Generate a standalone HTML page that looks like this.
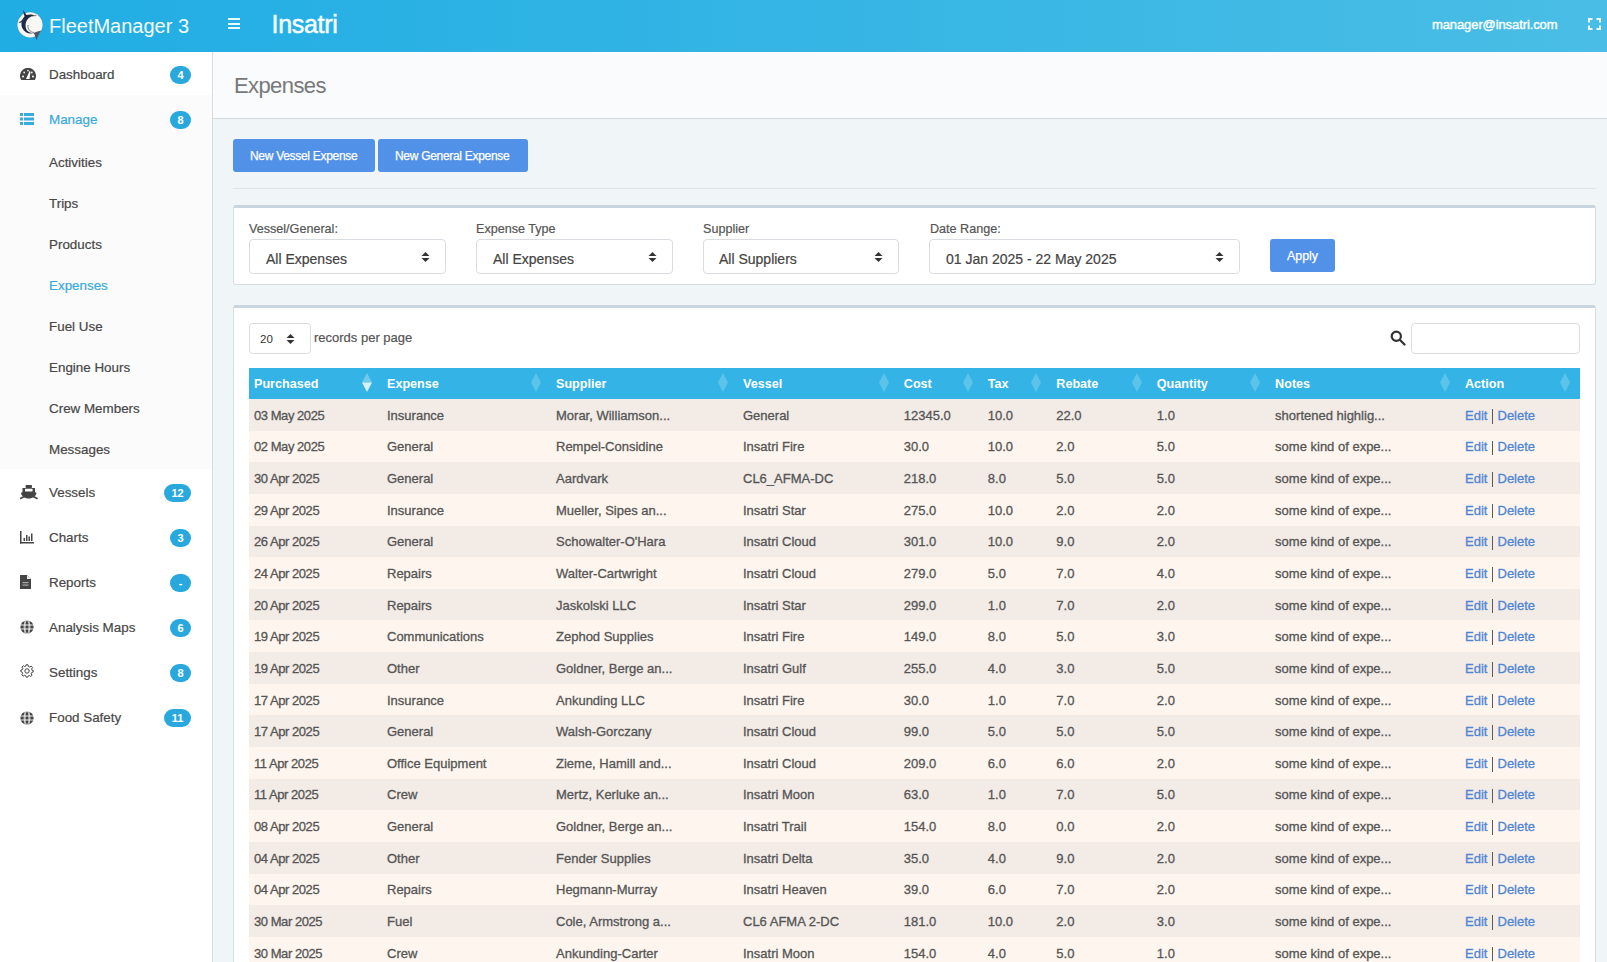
<!DOCTYPE html>
<html><head><meta charset="utf-8">
<style>
*{box-sizing:border-box}
html,body{margin:0;padding:0}
body{width:1607px;height:962px;overflow:hidden;position:relative;font-family:"Liberation Sans",sans-serif;background:#f0f5f8;color:#444}
.abs{position:absolute}
.t{position:absolute;white-space:nowrap;line-height:1}
.badge{position:absolute;height:18px;border-radius:9px;background:#29a8de;color:#fff;font-weight:700;font-size:11px;line-height:18px;text-align:center;font-family:"Liberation Sans",sans-serif}
</style></head><body>
<div class="abs" style="left:0px;top:0px;width:1607px;height:52px;background:linear-gradient(to right,#20ade4,#49bde5)"></div>
<svg class="abs" style="left:12px;top:6px" width="36" height="38" viewBox="0 0 36 38">
<circle cx="18" cy="18.8" r="13.2" fill="#1d94cc" opacity="0.6"/>
<circle cx="18" cy="18.8" r="12.6" fill="#f9f7f2"/>
<path d="M11 4 L14.5 9 C17 8 20.5 8.2 23 9.8 C20 10 18 11 16.2 12.5 C13.5 15 13 19 14 22.5 C15 25.5 18 27.2 21.5 27 C17.5 28.5 12.5 26.5 10.5 22.5 C8.5 18.5 9.5 13.5 12.5 10.5 Z" fill="#1f2b47"/>
<path d="M14.5 9 C13 13 8 15 6.5 17 C9 16.5 10.5 16 11.5 15.5" fill="#2a3858"/>
<path d="M16 19 C15.5 23 18 26 22 26.5" stroke="#6b7280" stroke-width="0.9" fill="none"/>
<path d="M21.5 27 C24 26 27 25 29.5 24.5 C27 27.5 25.5 30.5 24.5 34.5 C23.8 31.5 23 29 21.5 27 Z" fill="#4b5563"/>
<path d="M20 10 L24.5 9.5" stroke="#555" stroke-width="0.7"/>
</svg>
<div class="t" style="left:49.00px;top:16.07px;font-size:20px;color:#f4fbff">FleetManager 3</div>
<div class="abs" style="left:228px;top:18px;width:12px;height:2px;background:#e8fbff"></div>
<div class="abs" style="left:228px;top:23px;width:12px;height:2px;background:#e8fbff"></div>
<div class="abs" style="left:228px;top:27px;width:12px;height:2px;background:#e8fbff"></div>
<div class="t" style="left:271.50px;top:11.84px;font-size:25px;color:#f7fdff;letter-spacing:-0.3px;-webkit-text-stroke:0.5px #f7fdff">Insatri</div>
<div class="t" style="left:1432.00px;top:18.00px;font-size:13px;color:#f7fdff;letter-spacing:-0.1px;-webkit-text-stroke:0.45px #f7fdff">manager@insatri.com</div>
<svg class="abs" style="left:1588px;top:18px" width="13" height="12" viewBox="0 0 13 12" fill="none" stroke="#f4fbff" stroke-width="2">
<path d="M1 4.5V1H4.5M8.5 1H12V4.5M12 7.5V11H8.5M4.5 11H1V7.5"/></svg>
<div class="abs" style="left:0px;top:52px;width:212px;height:910px;background:#fff"></div>
<div class="abs" style="left:212px;top:52px;width:1px;height:910px;background:#d9dbdd"></div>
<div class="abs" style="left:0px;top:95px;width:212px;height:374px;background:#fbfbfb"></div>
<div class="t" style="left:49.00px;top:67.96px;font-size:13.4px;color:#474747;-webkit-text-stroke:0.2px currentColor">Dashboard</div>
<div class="t" style="left:49.00px;top:112.96px;font-size:13.4px;color:#38aadc;-webkit-text-stroke:0.2px currentColor">Manage</div>
<div class="t" style="left:49.00px;top:155.66px;font-size:13.4px;color:#474747;-webkit-text-stroke:0.2px currentColor">Activities</div>
<div class="t" style="left:49.00px;top:196.66px;font-size:13.4px;color:#474747;-webkit-text-stroke:0.2px currentColor">Trips</div>
<div class="t" style="left:49.00px;top:237.66px;font-size:13.4px;color:#474747;-webkit-text-stroke:0.2px currentColor">Products</div>
<div class="t" style="left:49.00px;top:278.66px;font-size:13.4px;color:#38aadc;-webkit-text-stroke:0.2px currentColor">Expenses</div>
<div class="t" style="left:49.00px;top:319.66px;font-size:13.4px;color:#474747;-webkit-text-stroke:0.2px currentColor">Fuel Use</div>
<div class="t" style="left:49.00px;top:360.66px;font-size:13.4px;color:#474747;-webkit-text-stroke:0.2px currentColor">Engine Hours</div>
<div class="t" style="left:49.00px;top:401.66px;font-size:13.4px;color:#474747;-webkit-text-stroke:0.2px currentColor">Crew Members</div>
<div class="t" style="left:49.00px;top:442.66px;font-size:13.4px;color:#474747;-webkit-text-stroke:0.2px currentColor">Messages</div>
<div class="t" style="left:49.00px;top:485.66px;font-size:13.4px;color:#474747;-webkit-text-stroke:0.2px currentColor">Vessels</div>
<div class="t" style="left:49.00px;top:530.66px;font-size:13.4px;color:#474747;-webkit-text-stroke:0.2px currentColor">Charts</div>
<div class="t" style="left:49.00px;top:575.66px;font-size:13.4px;color:#474747;-webkit-text-stroke:0.2px currentColor">Reports</div>
<div class="t" style="left:49.00px;top:620.66px;font-size:13.4px;color:#474747;-webkit-text-stroke:0.2px currentColor">Analysis Maps</div>
<div class="t" style="left:49.00px;top:665.66px;font-size:13.4px;color:#474747;-webkit-text-stroke:0.2px currentColor">Settings</div>
<div class="t" style="left:49.00px;top:710.66px;font-size:13.4px;color:#474747;-webkit-text-stroke:0.2px currentColor">Food Safety</div>
<div class="badge" style="left:170px;top:66px;width:21px">4</div>
<div class="badge" style="left:170px;top:111px;width:21px">8</div>
<div class="badge" style="left:164px;top:484px;width:27px">12</div>
<div class="badge" style="left:170px;top:529px;width:21px">3</div>
<div class="badge" style="left:170px;top:574px;width:21px">-</div>
<div class="badge" style="left:170px;top:619px;width:21px">6</div>
<div class="badge" style="left:170px;top:664px;width:21px">8</div>
<div class="badge" style="left:164px;top:709px;width:27px">11</div>
<svg class="abs" style="left:20px;top:68px" width="16" height="12" viewBox="0 0 16 12">
<path d="M1.2 12 A8 8 0 1 1 14.8 12 Z" fill="#444"/>
<circle cx="3" cy="8.5" r="1" fill="#fff"/><circle cx="13" cy="8.5" r="1" fill="#fff"/>
<circle cx="4.2" cy="4.5" r="0.9" fill="#eee"/><circle cx="11.8" cy="4.5" r="0.9" fill="#eee"/><circle cx="8" cy="2.6" r="0.9" fill="#eee"/>
<path d="M6 11 L9.6 3 L10.5 3.4 L9.6 11 Z" fill="#fff"/>
</svg>
<svg class="abs" style="left:20px;top:113px" width="14" height="12" viewBox="0 0 14 12" fill="#38aadc">
<rect x="0" y="0" width="3" height="3"/><rect x="4" y="0" width="10" height="3"/>
<rect x="0" y="4.5" width="3" height="3"/><rect x="4" y="4.5" width="10" height="3"/>
<rect x="0" y="9" width="3" height="3"/><rect x="4" y="9" width="10" height="3"/>
</svg>
<svg class="abs" style="left:20px;top:484px" width="18" height="16" viewBox="0 0 18 16">
<rect x="5.5" y="1" width="6.5" height="3" rx="1" fill="#444"/>
<path d="M2.5 4 H15 V8 L16.5 9 C16 12 13 14.5 8.75 14.5 C4.5 14.5 1.5 12 1 9 L2.5 8 Z" fill="#444"/>
<rect x="5" y="4.8" width="7.5" height="2.8" rx="0.5" fill="#fff"/>
<path d="M0.5 14.5 Q3 13 4.5 12.5 M13 12.5 Q14.5 13 17 14.5" stroke="#444" stroke-width="1.5" fill="none" stroke-linecap="round"/>
</svg>
<svg class="abs" style="left:20px;top:530px" width="14" height="14" viewBox="0 0 14 14" fill="#444">
<rect x="0" y="1" width="1.5" height="12.5"/><rect x="0" y="12" width="14" height="1.5"/>
<rect x="3.5" y="8" width="1.5" height="3"/><rect x="6" y="5" width="1.5" height="6"/><rect x="8.5" y="6.5" width="1.5" height="4.5"/><rect x="11" y="3.5" width="1.5" height="7.5"/>
</svg>
<svg class="abs" style="left:20px;top:575px" width="11" height="14" viewBox="0 0 11 14">
<path d="M0 0 H7 L11 4 V14 H0 Z" fill="#444"/><path d="M7 0 V4 H11" fill="#fff" opacity="0.9"/>
<rect x="2.5" y="7" width="6" height="1.2" fill="#aaa"/><rect x="2.5" y="9.5" width="6" height="1.2" fill="#aaa"/>
</svg>
<svg class="abs" style="left:20px;top:620px" width="14" height="14" viewBox="0 0 14 14">
<circle cx="7" cy="7" r="6.6" fill="#444"/>
<path d="M0.5 5H13.5M0.5 9H13.5M5 0.5V13.5M9 0.5V13.5" stroke="#fff" stroke-width="0.9"/>
<path d="M7 0.4 C3 3 3 11 7 13.6 C11 11 11 3 7 0.4" stroke="#fff" stroke-width="0.6" fill="none"/>
</svg>
<svg class="abs" style="left:20px;top:710.5px" width="14" height="14" viewBox="0 0 14 14">
<circle cx="7" cy="7" r="6.6" fill="#444"/>
<path d="M0.5 5H13.5M0.5 9H13.5M5 0.5V13.5M9 0.5V13.5" stroke="#fff" stroke-width="0.9"/>
<path d="M7 0.4 C3 3 3 11 7 13.6 C11 11 11 3 7 0.4" stroke="#fff" stroke-width="0.6" fill="none"/>
</svg>
<svg class="abs" style="left:20px;top:664px" width="14" height="14" viewBox="0 0 14 14" fill="none" stroke="#444" stroke-width="1">
<path d="M6 0.8 H8 L8.4 2.4 L9.8 3 L11.2 2.1 L12.5 3.5 L11.6 4.9 L12.2 6.3 L13.2 6.5 V8 L11.8 8.4 L11.2 9.8 L12.1 11.2 L10.7 12.5 L9.3 11.6 L8 12.1 L7.6 13.2 H6.3 L5.9 11.9 L4.5 11.3 L3.1 12.2 L1.8 10.8 L2.6 9.4 L2 8 L0.8 7.6 V6.2 L2.2 5.8 L2.8 4.4 L1.9 3 L3.3 1.7 L4.7 2.6 L5.8 2.1 Z"/>
<circle cx="7" cy="7" r="2.2"/>
</svg>
<div class="abs" style="left:213px;top:52px;width:1394px;height:66px;background:#f9fbfc"></div>
<div class="abs" style="left:213px;top:118px;width:1394px;height:1px;background:#d3d9dd"></div>
<div class="abs" style="left:213px;top:119px;width:1394px;height:843px;background:#f0f5f8"></div>
<div class="t" style="left:234.00px;top:74.58px;font-size:22px;color:#787878;letter-spacing:-0.6px">Expenses</div>
<div class="abs" style="left:233px;top:139px;width:142px;height:33px;background:#5291e8;border-radius:3px"></div>
<div class="t" style="left:250.00px;top:149.84px;font-size:12px;color:#fff;letter-spacing:-0.3px;-webkit-text-stroke:0.25px #fff">New Vessel Expense</div>
<div class="abs" style="left:378px;top:139px;width:150px;height:33px;background:#5291e8;border-radius:3px"></div>
<div class="t" style="left:395.00px;top:149.84px;font-size:12px;color:#fff;letter-spacing:-0.3px;-webkit-text-stroke:0.25px #fff">New General Expense</div>
<div class="abs" style="left:233px;top:188px;width:1363px;height:1px;background:#dde3e7"></div>
<div class="abs" style="left:233px;top:205px;width:1363px;height:80px;background:#fff;border:1px solid #d5dde2;border-top:3px solid #c9d6df;border-radius:3px"></div>
<div class="t" style="left:249.00px;top:223.13px;font-size:12.6px;color:#555;-webkit-text-stroke:0.2px currentColor">Vessel/General:</div>
<div class="t" style="left:476.00px;top:223.13px;font-size:12.6px;color:#555;-webkit-text-stroke:0.2px currentColor">Expense Type</div>
<div class="t" style="left:703.00px;top:223.13px;font-size:12.6px;color:#555;-webkit-text-stroke:0.2px currentColor">Supplier</div>
<div class="t" style="left:930.00px;top:223.13px;font-size:12.6px;color:#555;-webkit-text-stroke:0.2px currentColor">Date Range:</div>
<div class="abs" style="left:249px;top:239px;width:197px;height:35px;background:#fff;border:1px solid #d9dde1;border-radius:4px"></div>
<div class="t" style="left:266.00px;top:252.45px;font-size:14px;color:#444;-webkit-text-stroke:0.2px currentColor">All Expenses</div>
<svg class="abs" style="left:421px;top:252px" width="9" height="10" viewBox="0 0 9 10" fill="#333">
<path d="M4.5 0 L8.5 4 H0.5 Z M0.5 6 H8.5 L4.5 10 Z"/></svg>
<div class="abs" style="left:476px;top:239px;width:197px;height:35px;background:#fff;border:1px solid #d9dde1;border-radius:4px"></div>
<div class="t" style="left:493.00px;top:252.45px;font-size:14px;color:#444;-webkit-text-stroke:0.2px currentColor">All Expenses</div>
<svg class="abs" style="left:648px;top:252px" width="9" height="10" viewBox="0 0 9 10" fill="#333">
<path d="M4.5 0 L8.5 4 H0.5 Z M0.5 6 H8.5 L4.5 10 Z"/></svg>
<div class="abs" style="left:703px;top:239px;width:196px;height:35px;background:#fff;border:1px solid #d9dde1;border-radius:4px"></div>
<div class="t" style="left:719.00px;top:252.45px;font-size:14px;color:#444;-webkit-text-stroke:0.2px currentColor">All Suppliers</div>
<svg class="abs" style="left:874px;top:252px" width="9" height="10" viewBox="0 0 9 10" fill="#333">
<path d="M4.5 0 L8.5 4 H0.5 Z M0.5 6 H8.5 L4.5 10 Z"/></svg>
<div class="abs" style="left:929px;top:239px;width:311px;height:35px;background:#fff;border:1px solid #d9dde1;border-radius:4px"></div>
<div class="t" style="left:946.00px;top:251.75px;font-size:14px;color:#444;-webkit-text-stroke:0.2px currentColor">01 Jan 2025 - 22 May 2025</div>
<svg class="abs" style="left:1215px;top:252px" width="9" height="10" viewBox="0 0 9 10" fill="#333">
<path d="M4.5 0 L8.5 4 H0.5 Z M0.5 6 H8.5 L4.5 10 Z"/></svg>
<div class="abs" style="left:1270px;top:239px;width:65px;height:33px;background:#5291e8;border-radius:3px"></div>
<div class="t" style="left:1287.00px;top:249.50px;font-size:12.4px;color:#fff;letter-spacing:0px;-webkit-text-stroke:0.25px #fff">Apply</div>
<div class="abs" style="left:233px;top:305px;width:1363px;height:700px;background:#fff;border:1px solid #d5dde2;border-top:3px solid #c9d6df;border-radius:3px"></div>
<div class="abs" style="left:249px;top:323px;width:62px;height:31px;background:#fff;border:1px solid #d9dde1;border-radius:4px"></div>
<div class="t" style="left:260.00px;top:334.27px;font-size:11.5px;color:#333">20</div>
<svg class="abs" style="left:286px;top:334px" width="9" height="10" viewBox="0 0 9 10" fill="#333">
<path d="M4.5 0 L8.5 4 H0.5 Z M0.5 6 H8.5 L4.5 10 Z"/></svg>
<div class="t" style="left:314.00px;top:330.70px;font-size:13px;color:#555;-webkit-text-stroke:0.2px currentColor">records per page</div>
<svg class="abs" style="left:1390px;top:330px" width="16" height="16" viewBox="0 0 16 16" fill="none" stroke="#333" stroke-width="2.2">
<circle cx="6.3" cy="6.3" r="4.6"/><path d="M9.8 9.8 L14.5 14.5" stroke-linecap="round"/></svg>
<div class="abs" style="left:1411px;top:323px;width:169px;height:31px;background:#fff;border:1px solid #d9dde1;border-radius:4px"></div>
<div class="abs" style="left:249px;top:368px;width:1331px;height:31px;background:#34b4e6"></div>
<div class="t" style="left:254.00px;top:378.03px;font-size:12.6px;color:#fff;font-weight:700">Purchased</div>
<svg class="abs" style="left:361.7px;top:372.5px" width="10" height="19" viewBox="0 0 10 19">
<path d="M5 0 L10 9.5 H0 Z" fill="#fff" opacity="0.3"/><path d="M0 9.5 H10 L5 19 Z" fill="#fff" opacity="0.8"/></svg>
<div class="t" style="left:387.00px;top:378.03px;font-size:12.6px;color:#fff;font-weight:700">Expense</div>
<svg class="abs" style="left:530.7px;top:372.5px" width="10" height="19" viewBox="0 0 10 19">
<path d="M5 0 L10 9.5 L5 19 L0 9.5 Z" fill="#fff" opacity="0.2"/></svg>
<div class="t" style="left:556.00px;top:378.03px;font-size:12.6px;color:#fff;font-weight:700">Supplier</div>
<svg class="abs" style="left:717.7px;top:372.5px" width="10" height="19" viewBox="0 0 10 19">
<path d="M5 0 L10 9.5 L5 19 L0 9.5 Z" fill="#fff" opacity="0.2"/></svg>
<div class="t" style="left:743.00px;top:378.03px;font-size:12.6px;color:#fff;font-weight:700">Vessel</div>
<svg class="abs" style="left:878.5px;top:372.5px" width="10" height="19" viewBox="0 0 10 19">
<path d="M5 0 L10 9.5 L5 19 L0 9.5 Z" fill="#fff" opacity="0.2"/></svg>
<div class="t" style="left:903.80px;top:378.03px;font-size:12.6px;color:#fff;font-weight:700">Cost</div>
<svg class="abs" style="left:962.5px;top:372.5px" width="10" height="19" viewBox="0 0 10 19">
<path d="M5 0 L10 9.5 L5 19 L0 9.5 Z" fill="#fff" opacity="0.2"/></svg>
<div class="t" style="left:987.80px;top:378.03px;font-size:12.6px;color:#fff;font-weight:700">Tax</div>
<svg class="abs" style="left:1031.0px;top:372.5px" width="10" height="19" viewBox="0 0 10 19">
<path d="M5 0 L10 9.5 L5 19 L0 9.5 Z" fill="#fff" opacity="0.2"/></svg>
<div class="t" style="left:1056.30px;top:378.03px;font-size:12.6px;color:#fff;font-weight:700">Rebate</div>
<svg class="abs" style="left:1131.5px;top:372.5px" width="10" height="19" viewBox="0 0 10 19">
<path d="M5 0 L10 9.5 L5 19 L0 9.5 Z" fill="#fff" opacity="0.2"/></svg>
<div class="t" style="left:1156.80px;top:378.03px;font-size:12.6px;color:#fff;font-weight:700">Quantity</div>
<svg class="abs" style="left:1249.8px;top:372.5px" width="10" height="19" viewBox="0 0 10 19">
<path d="M5 0 L10 9.5 L5 19 L0 9.5 Z" fill="#fff" opacity="0.2"/></svg>
<div class="t" style="left:1275.10px;top:378.03px;font-size:12.6px;color:#fff;font-weight:700">Notes</div>
<svg class="abs" style="left:1439.6px;top:372.5px" width="10" height="19" viewBox="0 0 10 19">
<path d="M5 0 L10 9.5 L5 19 L0 9.5 Z" fill="#fff" opacity="0.2"/></svg>
<div class="t" style="left:1464.90px;top:378.03px;font-size:12.6px;color:#fff;font-weight:700">Action</div>
<svg class="abs" style="left:1559.7px;top:372.5px" width="10" height="19" viewBox="0 0 10 19">
<path d="M5 0 L10 9.5 L5 19 L0 9.5 Z" fill="#fff" opacity="0.2"/></svg>
<div class="abs" style="left:249px;top:399.00px;width:1331px;height:31.64px;background:#f2ebe6"></div>
<div class="t" style="left:254.00px;top:408.80px;font-size:13px;color:#555;letter-spacing:-0.45px;-webkit-text-stroke:0.3px currentColor">03 May 2025</div>
<div class="t" style="left:387.00px;top:408.80px;font-size:13px;color:#555;-webkit-text-stroke:0.3px currentColor">Insurance</div>
<div class="t" style="left:556.00px;top:408.80px;font-size:13px;color:#555;-webkit-text-stroke:0.3px currentColor">Morar, Williamson...</div>
<div class="t" style="left:743.00px;top:408.80px;font-size:13px;color:#555;-webkit-text-stroke:0.3px currentColor">General</div>
<div class="t" style="left:903.80px;top:408.80px;font-size:13px;color:#555;-webkit-text-stroke:0.3px currentColor">12345.0</div>
<div class="t" style="left:987.80px;top:408.80px;font-size:13px;color:#555;-webkit-text-stroke:0.3px currentColor">10.0</div>
<div class="t" style="left:1056.30px;top:408.80px;font-size:13px;color:#555;-webkit-text-stroke:0.3px currentColor">22.0</div>
<div class="t" style="left:1156.80px;top:408.80px;font-size:13px;color:#555;-webkit-text-stroke:0.3px currentColor">1.0</div>
<div class="t" style="left:1275.10px;top:408.80px;font-size:13px;color:#555;-webkit-text-stroke:0.3px currentColor">shortened highlig...</div>
<div class="t" style="left:1465.00px;top:408.80px;font-size:13px;color:#4f85d3;-webkit-text-stroke:0.3px currentColor">Edit</div>
<div class="abs" style="left:1492.3px;top:409.00px;width:1.2px;height:14.5px;background:#5a5a5a"></div>
<div class="t" style="left:1497.50px;top:408.80px;font-size:13px;color:#4f85d3;-webkit-text-stroke:0.3px currentColor">Delete</div>
<div class="abs" style="left:249px;top:430.64px;width:1331px;height:31.64px;background:#fef6ee"></div>
<div class="t" style="left:254.00px;top:440.44px;font-size:13px;color:#555;letter-spacing:-0.45px;-webkit-text-stroke:0.3px currentColor">02 May 2025</div>
<div class="t" style="left:387.00px;top:440.44px;font-size:13px;color:#555;-webkit-text-stroke:0.3px currentColor">General</div>
<div class="t" style="left:556.00px;top:440.44px;font-size:13px;color:#555;-webkit-text-stroke:0.3px currentColor">Rempel-Considine</div>
<div class="t" style="left:743.00px;top:440.44px;font-size:13px;color:#555;-webkit-text-stroke:0.3px currentColor">Insatri Fire</div>
<div class="t" style="left:903.80px;top:440.44px;font-size:13px;color:#555;-webkit-text-stroke:0.3px currentColor">30.0</div>
<div class="t" style="left:987.80px;top:440.44px;font-size:13px;color:#555;-webkit-text-stroke:0.3px currentColor">10.0</div>
<div class="t" style="left:1056.30px;top:440.44px;font-size:13px;color:#555;-webkit-text-stroke:0.3px currentColor">2.0</div>
<div class="t" style="left:1156.80px;top:440.44px;font-size:13px;color:#555;-webkit-text-stroke:0.3px currentColor">5.0</div>
<div class="t" style="left:1275.10px;top:440.44px;font-size:13px;color:#555;-webkit-text-stroke:0.3px currentColor">some kind of expe...</div>
<div class="t" style="left:1465.00px;top:440.44px;font-size:13px;color:#4f85d3;-webkit-text-stroke:0.3px currentColor">Edit</div>
<div class="abs" style="left:1492.3px;top:440.64px;width:1.2px;height:14.5px;background:#5a5a5a"></div>
<div class="t" style="left:1497.50px;top:440.44px;font-size:13px;color:#4f85d3;-webkit-text-stroke:0.3px currentColor">Delete</div>
<div class="abs" style="left:249px;top:462.28px;width:1331px;height:31.64px;background:#f2ebe6"></div>
<div class="t" style="left:254.00px;top:472.08px;font-size:13px;color:#555;letter-spacing:-0.45px;-webkit-text-stroke:0.3px currentColor">30 Apr 2025</div>
<div class="t" style="left:387.00px;top:472.08px;font-size:13px;color:#555;-webkit-text-stroke:0.3px currentColor">General</div>
<div class="t" style="left:556.00px;top:472.08px;font-size:13px;color:#555;-webkit-text-stroke:0.3px currentColor">Aardvark</div>
<div class="t" style="left:743.00px;top:472.08px;font-size:13px;color:#555;-webkit-text-stroke:0.3px currentColor">CL6_AFMA-DC</div>
<div class="t" style="left:903.80px;top:472.08px;font-size:13px;color:#555;-webkit-text-stroke:0.3px currentColor">218.0</div>
<div class="t" style="left:987.80px;top:472.08px;font-size:13px;color:#555;-webkit-text-stroke:0.3px currentColor">8.0</div>
<div class="t" style="left:1056.30px;top:472.08px;font-size:13px;color:#555;-webkit-text-stroke:0.3px currentColor">5.0</div>
<div class="t" style="left:1156.80px;top:472.08px;font-size:13px;color:#555;-webkit-text-stroke:0.3px currentColor">5.0</div>
<div class="t" style="left:1275.10px;top:472.08px;font-size:13px;color:#555;-webkit-text-stroke:0.3px currentColor">some kind of expe...</div>
<div class="t" style="left:1465.00px;top:472.08px;font-size:13px;color:#4f85d3;-webkit-text-stroke:0.3px currentColor">Edit</div>
<div class="abs" style="left:1492.3px;top:472.28px;width:1.2px;height:14.5px;background:#5a5a5a"></div>
<div class="t" style="left:1497.50px;top:472.08px;font-size:13px;color:#4f85d3;-webkit-text-stroke:0.3px currentColor">Delete</div>
<div class="abs" style="left:249px;top:493.92px;width:1331px;height:31.64px;background:#fef6ee"></div>
<div class="t" style="left:254.00px;top:503.72px;font-size:13px;color:#555;letter-spacing:-0.45px;-webkit-text-stroke:0.3px currentColor">29 Apr 2025</div>
<div class="t" style="left:387.00px;top:503.72px;font-size:13px;color:#555;-webkit-text-stroke:0.3px currentColor">Insurance</div>
<div class="t" style="left:556.00px;top:503.72px;font-size:13px;color:#555;-webkit-text-stroke:0.3px currentColor">Mueller, Sipes an...</div>
<div class="t" style="left:743.00px;top:503.72px;font-size:13px;color:#555;-webkit-text-stroke:0.3px currentColor">Insatri Star</div>
<div class="t" style="left:903.80px;top:503.72px;font-size:13px;color:#555;-webkit-text-stroke:0.3px currentColor">275.0</div>
<div class="t" style="left:987.80px;top:503.72px;font-size:13px;color:#555;-webkit-text-stroke:0.3px currentColor">10.0</div>
<div class="t" style="left:1056.30px;top:503.72px;font-size:13px;color:#555;-webkit-text-stroke:0.3px currentColor">2.0</div>
<div class="t" style="left:1156.80px;top:503.72px;font-size:13px;color:#555;-webkit-text-stroke:0.3px currentColor">2.0</div>
<div class="t" style="left:1275.10px;top:503.72px;font-size:13px;color:#555;-webkit-text-stroke:0.3px currentColor">some kind of expe...</div>
<div class="t" style="left:1465.00px;top:503.72px;font-size:13px;color:#4f85d3;-webkit-text-stroke:0.3px currentColor">Edit</div>
<div class="abs" style="left:1492.3px;top:503.92px;width:1.2px;height:14.5px;background:#5a5a5a"></div>
<div class="t" style="left:1497.50px;top:503.72px;font-size:13px;color:#4f85d3;-webkit-text-stroke:0.3px currentColor">Delete</div>
<div class="abs" style="left:249px;top:525.56px;width:1331px;height:31.64px;background:#f2ebe6"></div>
<div class="t" style="left:254.00px;top:535.36px;font-size:13px;color:#555;letter-spacing:-0.45px;-webkit-text-stroke:0.3px currentColor">26 Apr 2025</div>
<div class="t" style="left:387.00px;top:535.36px;font-size:13px;color:#555;-webkit-text-stroke:0.3px currentColor">General</div>
<div class="t" style="left:556.00px;top:535.36px;font-size:13px;color:#555;-webkit-text-stroke:0.3px currentColor">Schowalter-O'Hara</div>
<div class="t" style="left:743.00px;top:535.36px;font-size:13px;color:#555;-webkit-text-stroke:0.3px currentColor">Insatri Cloud</div>
<div class="t" style="left:903.80px;top:535.36px;font-size:13px;color:#555;-webkit-text-stroke:0.3px currentColor">301.0</div>
<div class="t" style="left:987.80px;top:535.36px;font-size:13px;color:#555;-webkit-text-stroke:0.3px currentColor">10.0</div>
<div class="t" style="left:1056.30px;top:535.36px;font-size:13px;color:#555;-webkit-text-stroke:0.3px currentColor">9.0</div>
<div class="t" style="left:1156.80px;top:535.36px;font-size:13px;color:#555;-webkit-text-stroke:0.3px currentColor">2.0</div>
<div class="t" style="left:1275.10px;top:535.36px;font-size:13px;color:#555;-webkit-text-stroke:0.3px currentColor">some kind of expe...</div>
<div class="t" style="left:1465.00px;top:535.36px;font-size:13px;color:#4f85d3;-webkit-text-stroke:0.3px currentColor">Edit</div>
<div class="abs" style="left:1492.3px;top:535.56px;width:1.2px;height:14.5px;background:#5a5a5a"></div>
<div class="t" style="left:1497.50px;top:535.36px;font-size:13px;color:#4f85d3;-webkit-text-stroke:0.3px currentColor">Delete</div>
<div class="abs" style="left:249px;top:557.20px;width:1331px;height:31.64px;background:#fef6ee"></div>
<div class="t" style="left:254.00px;top:567.00px;font-size:13px;color:#555;letter-spacing:-0.45px;-webkit-text-stroke:0.3px currentColor">24 Apr 2025</div>
<div class="t" style="left:387.00px;top:567.00px;font-size:13px;color:#555;-webkit-text-stroke:0.3px currentColor">Repairs</div>
<div class="t" style="left:556.00px;top:567.00px;font-size:13px;color:#555;-webkit-text-stroke:0.3px currentColor">Walter-Cartwright</div>
<div class="t" style="left:743.00px;top:567.00px;font-size:13px;color:#555;-webkit-text-stroke:0.3px currentColor">Insatri Cloud</div>
<div class="t" style="left:903.80px;top:567.00px;font-size:13px;color:#555;-webkit-text-stroke:0.3px currentColor">279.0</div>
<div class="t" style="left:987.80px;top:567.00px;font-size:13px;color:#555;-webkit-text-stroke:0.3px currentColor">5.0</div>
<div class="t" style="left:1056.30px;top:567.00px;font-size:13px;color:#555;-webkit-text-stroke:0.3px currentColor">7.0</div>
<div class="t" style="left:1156.80px;top:567.00px;font-size:13px;color:#555;-webkit-text-stroke:0.3px currentColor">4.0</div>
<div class="t" style="left:1275.10px;top:567.00px;font-size:13px;color:#555;-webkit-text-stroke:0.3px currentColor">some kind of expe...</div>
<div class="t" style="left:1465.00px;top:567.00px;font-size:13px;color:#4f85d3;-webkit-text-stroke:0.3px currentColor">Edit</div>
<div class="abs" style="left:1492.3px;top:567.20px;width:1.2px;height:14.5px;background:#5a5a5a"></div>
<div class="t" style="left:1497.50px;top:567.00px;font-size:13px;color:#4f85d3;-webkit-text-stroke:0.3px currentColor">Delete</div>
<div class="abs" style="left:249px;top:588.84px;width:1331px;height:31.64px;background:#f2ebe6"></div>
<div class="t" style="left:254.00px;top:598.64px;font-size:13px;color:#555;letter-spacing:-0.45px;-webkit-text-stroke:0.3px currentColor">20 Apr 2025</div>
<div class="t" style="left:387.00px;top:598.64px;font-size:13px;color:#555;-webkit-text-stroke:0.3px currentColor">Repairs</div>
<div class="t" style="left:556.00px;top:598.64px;font-size:13px;color:#555;-webkit-text-stroke:0.3px currentColor">Jaskolski LLC</div>
<div class="t" style="left:743.00px;top:598.64px;font-size:13px;color:#555;-webkit-text-stroke:0.3px currentColor">Insatri Star</div>
<div class="t" style="left:903.80px;top:598.64px;font-size:13px;color:#555;-webkit-text-stroke:0.3px currentColor">299.0</div>
<div class="t" style="left:987.80px;top:598.64px;font-size:13px;color:#555;-webkit-text-stroke:0.3px currentColor">1.0</div>
<div class="t" style="left:1056.30px;top:598.64px;font-size:13px;color:#555;-webkit-text-stroke:0.3px currentColor">7.0</div>
<div class="t" style="left:1156.80px;top:598.64px;font-size:13px;color:#555;-webkit-text-stroke:0.3px currentColor">2.0</div>
<div class="t" style="left:1275.10px;top:598.64px;font-size:13px;color:#555;-webkit-text-stroke:0.3px currentColor">some kind of expe...</div>
<div class="t" style="left:1465.00px;top:598.64px;font-size:13px;color:#4f85d3;-webkit-text-stroke:0.3px currentColor">Edit</div>
<div class="abs" style="left:1492.3px;top:598.84px;width:1.2px;height:14.5px;background:#5a5a5a"></div>
<div class="t" style="left:1497.50px;top:598.64px;font-size:13px;color:#4f85d3;-webkit-text-stroke:0.3px currentColor">Delete</div>
<div class="abs" style="left:249px;top:620.48px;width:1331px;height:31.64px;background:#fef6ee"></div>
<div class="t" style="left:254.00px;top:630.28px;font-size:13px;color:#555;letter-spacing:-0.45px;-webkit-text-stroke:0.3px currentColor">19 Apr 2025</div>
<div class="t" style="left:387.00px;top:630.28px;font-size:13px;color:#555;-webkit-text-stroke:0.3px currentColor">Communications</div>
<div class="t" style="left:556.00px;top:630.28px;font-size:13px;color:#555;-webkit-text-stroke:0.3px currentColor">Zephod Supplies</div>
<div class="t" style="left:743.00px;top:630.28px;font-size:13px;color:#555;-webkit-text-stroke:0.3px currentColor">Insatri Fire</div>
<div class="t" style="left:903.80px;top:630.28px;font-size:13px;color:#555;-webkit-text-stroke:0.3px currentColor">149.0</div>
<div class="t" style="left:987.80px;top:630.28px;font-size:13px;color:#555;-webkit-text-stroke:0.3px currentColor">8.0</div>
<div class="t" style="left:1056.30px;top:630.28px;font-size:13px;color:#555;-webkit-text-stroke:0.3px currentColor">5.0</div>
<div class="t" style="left:1156.80px;top:630.28px;font-size:13px;color:#555;-webkit-text-stroke:0.3px currentColor">3.0</div>
<div class="t" style="left:1275.10px;top:630.28px;font-size:13px;color:#555;-webkit-text-stroke:0.3px currentColor">some kind of expe...</div>
<div class="t" style="left:1465.00px;top:630.28px;font-size:13px;color:#4f85d3;-webkit-text-stroke:0.3px currentColor">Edit</div>
<div class="abs" style="left:1492.3px;top:630.48px;width:1.2px;height:14.5px;background:#5a5a5a"></div>
<div class="t" style="left:1497.50px;top:630.28px;font-size:13px;color:#4f85d3;-webkit-text-stroke:0.3px currentColor">Delete</div>
<div class="abs" style="left:249px;top:652.12px;width:1331px;height:31.64px;background:#f2ebe6"></div>
<div class="t" style="left:254.00px;top:661.92px;font-size:13px;color:#555;letter-spacing:-0.45px;-webkit-text-stroke:0.3px currentColor">19 Apr 2025</div>
<div class="t" style="left:387.00px;top:661.92px;font-size:13px;color:#555;-webkit-text-stroke:0.3px currentColor">Other</div>
<div class="t" style="left:556.00px;top:661.92px;font-size:13px;color:#555;-webkit-text-stroke:0.3px currentColor">Goldner, Berge an...</div>
<div class="t" style="left:743.00px;top:661.92px;font-size:13px;color:#555;-webkit-text-stroke:0.3px currentColor">Insatri Gulf</div>
<div class="t" style="left:903.80px;top:661.92px;font-size:13px;color:#555;-webkit-text-stroke:0.3px currentColor">255.0</div>
<div class="t" style="left:987.80px;top:661.92px;font-size:13px;color:#555;-webkit-text-stroke:0.3px currentColor">4.0</div>
<div class="t" style="left:1056.30px;top:661.92px;font-size:13px;color:#555;-webkit-text-stroke:0.3px currentColor">3.0</div>
<div class="t" style="left:1156.80px;top:661.92px;font-size:13px;color:#555;-webkit-text-stroke:0.3px currentColor">5.0</div>
<div class="t" style="left:1275.10px;top:661.92px;font-size:13px;color:#555;-webkit-text-stroke:0.3px currentColor">some kind of expe...</div>
<div class="t" style="left:1465.00px;top:661.92px;font-size:13px;color:#4f85d3;-webkit-text-stroke:0.3px currentColor">Edit</div>
<div class="abs" style="left:1492.3px;top:662.12px;width:1.2px;height:14.5px;background:#5a5a5a"></div>
<div class="t" style="left:1497.50px;top:661.92px;font-size:13px;color:#4f85d3;-webkit-text-stroke:0.3px currentColor">Delete</div>
<div class="abs" style="left:249px;top:683.76px;width:1331px;height:31.64px;background:#fef6ee"></div>
<div class="t" style="left:254.00px;top:693.56px;font-size:13px;color:#555;letter-spacing:-0.45px;-webkit-text-stroke:0.3px currentColor">17 Apr 2025</div>
<div class="t" style="left:387.00px;top:693.56px;font-size:13px;color:#555;-webkit-text-stroke:0.3px currentColor">Insurance</div>
<div class="t" style="left:556.00px;top:693.56px;font-size:13px;color:#555;-webkit-text-stroke:0.3px currentColor">Ankunding LLC</div>
<div class="t" style="left:743.00px;top:693.56px;font-size:13px;color:#555;-webkit-text-stroke:0.3px currentColor">Insatri Fire</div>
<div class="t" style="left:903.80px;top:693.56px;font-size:13px;color:#555;-webkit-text-stroke:0.3px currentColor">30.0</div>
<div class="t" style="left:987.80px;top:693.56px;font-size:13px;color:#555;-webkit-text-stroke:0.3px currentColor">1.0</div>
<div class="t" style="left:1056.30px;top:693.56px;font-size:13px;color:#555;-webkit-text-stroke:0.3px currentColor">7.0</div>
<div class="t" style="left:1156.80px;top:693.56px;font-size:13px;color:#555;-webkit-text-stroke:0.3px currentColor">2.0</div>
<div class="t" style="left:1275.10px;top:693.56px;font-size:13px;color:#555;-webkit-text-stroke:0.3px currentColor">some kind of expe...</div>
<div class="t" style="left:1465.00px;top:693.56px;font-size:13px;color:#4f85d3;-webkit-text-stroke:0.3px currentColor">Edit</div>
<div class="abs" style="left:1492.3px;top:693.76px;width:1.2px;height:14.5px;background:#5a5a5a"></div>
<div class="t" style="left:1497.50px;top:693.56px;font-size:13px;color:#4f85d3;-webkit-text-stroke:0.3px currentColor">Delete</div>
<div class="abs" style="left:249px;top:715.40px;width:1331px;height:31.64px;background:#f2ebe6"></div>
<div class="t" style="left:254.00px;top:725.20px;font-size:13px;color:#555;letter-spacing:-0.45px;-webkit-text-stroke:0.3px currentColor">17 Apr 2025</div>
<div class="t" style="left:387.00px;top:725.20px;font-size:13px;color:#555;-webkit-text-stroke:0.3px currentColor">General</div>
<div class="t" style="left:556.00px;top:725.20px;font-size:13px;color:#555;-webkit-text-stroke:0.3px currentColor">Walsh-Gorczany</div>
<div class="t" style="left:743.00px;top:725.20px;font-size:13px;color:#555;-webkit-text-stroke:0.3px currentColor">Insatri Cloud</div>
<div class="t" style="left:903.80px;top:725.20px;font-size:13px;color:#555;-webkit-text-stroke:0.3px currentColor">99.0</div>
<div class="t" style="left:987.80px;top:725.20px;font-size:13px;color:#555;-webkit-text-stroke:0.3px currentColor">5.0</div>
<div class="t" style="left:1056.30px;top:725.20px;font-size:13px;color:#555;-webkit-text-stroke:0.3px currentColor">5.0</div>
<div class="t" style="left:1156.80px;top:725.20px;font-size:13px;color:#555;-webkit-text-stroke:0.3px currentColor">5.0</div>
<div class="t" style="left:1275.10px;top:725.20px;font-size:13px;color:#555;-webkit-text-stroke:0.3px currentColor">some kind of expe...</div>
<div class="t" style="left:1465.00px;top:725.20px;font-size:13px;color:#4f85d3;-webkit-text-stroke:0.3px currentColor">Edit</div>
<div class="abs" style="left:1492.3px;top:725.40px;width:1.2px;height:14.5px;background:#5a5a5a"></div>
<div class="t" style="left:1497.50px;top:725.20px;font-size:13px;color:#4f85d3;-webkit-text-stroke:0.3px currentColor">Delete</div>
<div class="abs" style="left:249px;top:747.04px;width:1331px;height:31.64px;background:#fef6ee"></div>
<div class="t" style="left:254.00px;top:756.84px;font-size:13px;color:#555;letter-spacing:-0.45px;-webkit-text-stroke:0.3px currentColor">11 Apr 2025</div>
<div class="t" style="left:387.00px;top:756.84px;font-size:13px;color:#555;-webkit-text-stroke:0.3px currentColor">Office Equipment</div>
<div class="t" style="left:556.00px;top:756.84px;font-size:13px;color:#555;-webkit-text-stroke:0.3px currentColor">Zieme, Hamill and...</div>
<div class="t" style="left:743.00px;top:756.84px;font-size:13px;color:#555;-webkit-text-stroke:0.3px currentColor">Insatri Cloud</div>
<div class="t" style="left:903.80px;top:756.84px;font-size:13px;color:#555;-webkit-text-stroke:0.3px currentColor">209.0</div>
<div class="t" style="left:987.80px;top:756.84px;font-size:13px;color:#555;-webkit-text-stroke:0.3px currentColor">6.0</div>
<div class="t" style="left:1056.30px;top:756.84px;font-size:13px;color:#555;-webkit-text-stroke:0.3px currentColor">6.0</div>
<div class="t" style="left:1156.80px;top:756.84px;font-size:13px;color:#555;-webkit-text-stroke:0.3px currentColor">2.0</div>
<div class="t" style="left:1275.10px;top:756.84px;font-size:13px;color:#555;-webkit-text-stroke:0.3px currentColor">some kind of expe...</div>
<div class="t" style="left:1465.00px;top:756.84px;font-size:13px;color:#4f85d3;-webkit-text-stroke:0.3px currentColor">Edit</div>
<div class="abs" style="left:1492.3px;top:757.04px;width:1.2px;height:14.5px;background:#5a5a5a"></div>
<div class="t" style="left:1497.50px;top:756.84px;font-size:13px;color:#4f85d3;-webkit-text-stroke:0.3px currentColor">Delete</div>
<div class="abs" style="left:249px;top:778.68px;width:1331px;height:31.64px;background:#f2ebe6"></div>
<div class="t" style="left:254.00px;top:788.48px;font-size:13px;color:#555;letter-spacing:-0.45px;-webkit-text-stroke:0.3px currentColor">11 Apr 2025</div>
<div class="t" style="left:387.00px;top:788.48px;font-size:13px;color:#555;-webkit-text-stroke:0.3px currentColor">Crew</div>
<div class="t" style="left:556.00px;top:788.48px;font-size:13px;color:#555;-webkit-text-stroke:0.3px currentColor">Mertz, Kerluke an...</div>
<div class="t" style="left:743.00px;top:788.48px;font-size:13px;color:#555;-webkit-text-stroke:0.3px currentColor">Insatri Moon</div>
<div class="t" style="left:903.80px;top:788.48px;font-size:13px;color:#555;-webkit-text-stroke:0.3px currentColor">63.0</div>
<div class="t" style="left:987.80px;top:788.48px;font-size:13px;color:#555;-webkit-text-stroke:0.3px currentColor">1.0</div>
<div class="t" style="left:1056.30px;top:788.48px;font-size:13px;color:#555;-webkit-text-stroke:0.3px currentColor">7.0</div>
<div class="t" style="left:1156.80px;top:788.48px;font-size:13px;color:#555;-webkit-text-stroke:0.3px currentColor">5.0</div>
<div class="t" style="left:1275.10px;top:788.48px;font-size:13px;color:#555;-webkit-text-stroke:0.3px currentColor">some kind of expe...</div>
<div class="t" style="left:1465.00px;top:788.48px;font-size:13px;color:#4f85d3;-webkit-text-stroke:0.3px currentColor">Edit</div>
<div class="abs" style="left:1492.3px;top:788.68px;width:1.2px;height:14.5px;background:#5a5a5a"></div>
<div class="t" style="left:1497.50px;top:788.48px;font-size:13px;color:#4f85d3;-webkit-text-stroke:0.3px currentColor">Delete</div>
<div class="abs" style="left:249px;top:810.32px;width:1331px;height:31.64px;background:#fef6ee"></div>
<div class="t" style="left:254.00px;top:820.12px;font-size:13px;color:#555;letter-spacing:-0.45px;-webkit-text-stroke:0.3px currentColor">08 Apr 2025</div>
<div class="t" style="left:387.00px;top:820.12px;font-size:13px;color:#555;-webkit-text-stroke:0.3px currentColor">General</div>
<div class="t" style="left:556.00px;top:820.12px;font-size:13px;color:#555;-webkit-text-stroke:0.3px currentColor">Goldner, Berge an...</div>
<div class="t" style="left:743.00px;top:820.12px;font-size:13px;color:#555;-webkit-text-stroke:0.3px currentColor">Insatri Trail</div>
<div class="t" style="left:903.80px;top:820.12px;font-size:13px;color:#555;-webkit-text-stroke:0.3px currentColor">154.0</div>
<div class="t" style="left:987.80px;top:820.12px;font-size:13px;color:#555;-webkit-text-stroke:0.3px currentColor">8.0</div>
<div class="t" style="left:1056.30px;top:820.12px;font-size:13px;color:#555;-webkit-text-stroke:0.3px currentColor">0.0</div>
<div class="t" style="left:1156.80px;top:820.12px;font-size:13px;color:#555;-webkit-text-stroke:0.3px currentColor">2.0</div>
<div class="t" style="left:1275.10px;top:820.12px;font-size:13px;color:#555;-webkit-text-stroke:0.3px currentColor">some kind of expe...</div>
<div class="t" style="left:1465.00px;top:820.12px;font-size:13px;color:#4f85d3;-webkit-text-stroke:0.3px currentColor">Edit</div>
<div class="abs" style="left:1492.3px;top:820.32px;width:1.2px;height:14.5px;background:#5a5a5a"></div>
<div class="t" style="left:1497.50px;top:820.12px;font-size:13px;color:#4f85d3;-webkit-text-stroke:0.3px currentColor">Delete</div>
<div class="abs" style="left:249px;top:841.96px;width:1331px;height:31.64px;background:#f2ebe6"></div>
<div class="t" style="left:254.00px;top:851.76px;font-size:13px;color:#555;letter-spacing:-0.45px;-webkit-text-stroke:0.3px currentColor">04 Apr 2025</div>
<div class="t" style="left:387.00px;top:851.76px;font-size:13px;color:#555;-webkit-text-stroke:0.3px currentColor">Other</div>
<div class="t" style="left:556.00px;top:851.76px;font-size:13px;color:#555;-webkit-text-stroke:0.3px currentColor">Fender Supplies</div>
<div class="t" style="left:743.00px;top:851.76px;font-size:13px;color:#555;-webkit-text-stroke:0.3px currentColor">Insatri Delta</div>
<div class="t" style="left:903.80px;top:851.76px;font-size:13px;color:#555;-webkit-text-stroke:0.3px currentColor">35.0</div>
<div class="t" style="left:987.80px;top:851.76px;font-size:13px;color:#555;-webkit-text-stroke:0.3px currentColor">4.0</div>
<div class="t" style="left:1056.30px;top:851.76px;font-size:13px;color:#555;-webkit-text-stroke:0.3px currentColor">9.0</div>
<div class="t" style="left:1156.80px;top:851.76px;font-size:13px;color:#555;-webkit-text-stroke:0.3px currentColor">2.0</div>
<div class="t" style="left:1275.10px;top:851.76px;font-size:13px;color:#555;-webkit-text-stroke:0.3px currentColor">some kind of expe...</div>
<div class="t" style="left:1465.00px;top:851.76px;font-size:13px;color:#4f85d3;-webkit-text-stroke:0.3px currentColor">Edit</div>
<div class="abs" style="left:1492.3px;top:851.96px;width:1.2px;height:14.5px;background:#5a5a5a"></div>
<div class="t" style="left:1497.50px;top:851.76px;font-size:13px;color:#4f85d3;-webkit-text-stroke:0.3px currentColor">Delete</div>
<div class="abs" style="left:249px;top:873.60px;width:1331px;height:31.64px;background:#fef6ee"></div>
<div class="t" style="left:254.00px;top:883.40px;font-size:13px;color:#555;letter-spacing:-0.45px;-webkit-text-stroke:0.3px currentColor">04 Apr 2025</div>
<div class="t" style="left:387.00px;top:883.40px;font-size:13px;color:#555;-webkit-text-stroke:0.3px currentColor">Repairs</div>
<div class="t" style="left:556.00px;top:883.40px;font-size:13px;color:#555;-webkit-text-stroke:0.3px currentColor">Hegmann-Murray</div>
<div class="t" style="left:743.00px;top:883.40px;font-size:13px;color:#555;-webkit-text-stroke:0.3px currentColor">Insatri Heaven</div>
<div class="t" style="left:903.80px;top:883.40px;font-size:13px;color:#555;-webkit-text-stroke:0.3px currentColor">39.0</div>
<div class="t" style="left:987.80px;top:883.40px;font-size:13px;color:#555;-webkit-text-stroke:0.3px currentColor">6.0</div>
<div class="t" style="left:1056.30px;top:883.40px;font-size:13px;color:#555;-webkit-text-stroke:0.3px currentColor">7.0</div>
<div class="t" style="left:1156.80px;top:883.40px;font-size:13px;color:#555;-webkit-text-stroke:0.3px currentColor">2.0</div>
<div class="t" style="left:1275.10px;top:883.40px;font-size:13px;color:#555;-webkit-text-stroke:0.3px currentColor">some kind of expe...</div>
<div class="t" style="left:1465.00px;top:883.40px;font-size:13px;color:#4f85d3;-webkit-text-stroke:0.3px currentColor">Edit</div>
<div class="abs" style="left:1492.3px;top:883.60px;width:1.2px;height:14.5px;background:#5a5a5a"></div>
<div class="t" style="left:1497.50px;top:883.40px;font-size:13px;color:#4f85d3;-webkit-text-stroke:0.3px currentColor">Delete</div>
<div class="abs" style="left:249px;top:905.24px;width:1331px;height:31.64px;background:#f2ebe6"></div>
<div class="t" style="left:254.00px;top:915.04px;font-size:13px;color:#555;letter-spacing:-0.45px;-webkit-text-stroke:0.3px currentColor">30 Mar 2025</div>
<div class="t" style="left:387.00px;top:915.04px;font-size:13px;color:#555;-webkit-text-stroke:0.3px currentColor">Fuel</div>
<div class="t" style="left:556.00px;top:915.04px;font-size:13px;color:#555;-webkit-text-stroke:0.3px currentColor">Cole, Armstrong a...</div>
<div class="t" style="left:743.00px;top:915.04px;font-size:13px;color:#555;-webkit-text-stroke:0.3px currentColor">CL6 AFMA 2-DC</div>
<div class="t" style="left:903.80px;top:915.04px;font-size:13px;color:#555;-webkit-text-stroke:0.3px currentColor">181.0</div>
<div class="t" style="left:987.80px;top:915.04px;font-size:13px;color:#555;-webkit-text-stroke:0.3px currentColor">10.0</div>
<div class="t" style="left:1056.30px;top:915.04px;font-size:13px;color:#555;-webkit-text-stroke:0.3px currentColor">2.0</div>
<div class="t" style="left:1156.80px;top:915.04px;font-size:13px;color:#555;-webkit-text-stroke:0.3px currentColor">3.0</div>
<div class="t" style="left:1275.10px;top:915.04px;font-size:13px;color:#555;-webkit-text-stroke:0.3px currentColor">some kind of expe...</div>
<div class="t" style="left:1465.00px;top:915.04px;font-size:13px;color:#4f85d3;-webkit-text-stroke:0.3px currentColor">Edit</div>
<div class="abs" style="left:1492.3px;top:915.24px;width:1.2px;height:14.5px;background:#5a5a5a"></div>
<div class="t" style="left:1497.50px;top:915.04px;font-size:13px;color:#4f85d3;-webkit-text-stroke:0.3px currentColor">Delete</div>
<div class="abs" style="left:249px;top:936.88px;width:1331px;height:31.64px;background:#fef6ee"></div>
<div class="t" style="left:254.00px;top:946.68px;font-size:13px;color:#555;letter-spacing:-0.45px;-webkit-text-stroke:0.3px currentColor">30 Mar 2025</div>
<div class="t" style="left:387.00px;top:946.68px;font-size:13px;color:#555;-webkit-text-stroke:0.3px currentColor">Crew</div>
<div class="t" style="left:556.00px;top:946.68px;font-size:13px;color:#555;-webkit-text-stroke:0.3px currentColor">Ankunding-Carter</div>
<div class="t" style="left:743.00px;top:946.68px;font-size:13px;color:#555;-webkit-text-stroke:0.3px currentColor">Insatri Moon</div>
<div class="t" style="left:903.80px;top:946.68px;font-size:13px;color:#555;-webkit-text-stroke:0.3px currentColor">154.0</div>
<div class="t" style="left:987.80px;top:946.68px;font-size:13px;color:#555;-webkit-text-stroke:0.3px currentColor">4.0</div>
<div class="t" style="left:1056.30px;top:946.68px;font-size:13px;color:#555;-webkit-text-stroke:0.3px currentColor">5.0</div>
<div class="t" style="left:1156.80px;top:946.68px;font-size:13px;color:#555;-webkit-text-stroke:0.3px currentColor">1.0</div>
<div class="t" style="left:1275.10px;top:946.68px;font-size:13px;color:#555;-webkit-text-stroke:0.3px currentColor">some kind of expe...</div>
<div class="t" style="left:1465.00px;top:946.68px;font-size:13px;color:#4f85d3;-webkit-text-stroke:0.3px currentColor">Edit</div>
<div class="abs" style="left:1492.3px;top:946.88px;width:1.2px;height:14.5px;background:#5a5a5a"></div>
<div class="t" style="left:1497.50px;top:946.68px;font-size:13px;color:#4f85d3;-webkit-text-stroke:0.3px currentColor">Delete</div>
</body></html>
